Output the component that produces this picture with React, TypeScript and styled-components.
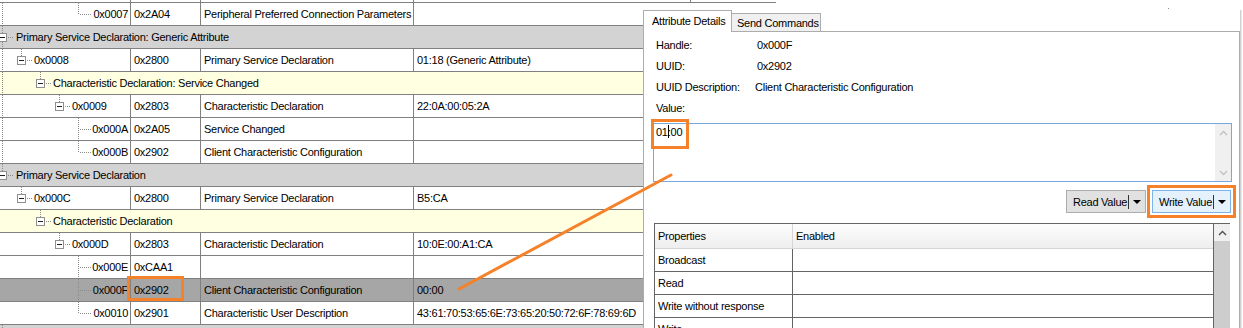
import React from "react";
import styled, { createGlobalStyle } from "styled-components";

const GRID = "#808080";
const ORANGE = "#f5822b";

const GlobalStyle = createGlobalStyle`
  html, body {
    margin: 0;
    padding: 0;
    background: #fff;
    overflow: hidden;
  }
  body {
    font-family: "Liberation Sans", Arial, sans-serif;
    font-size: 11px;
    letter-spacing: -0.25px;
    color: #000;
  }
`;

type Tone = "white" | "gray" | "yellow" | "selected";
const toneBg: Record<Tone, string> = {
  white: "#ffffff",
  gray: "#d3d3d3",
  yellow: "#ffffe1",
  selected: "#a6a6a6",
};

type AttrRow = {
  kind: "attr";
  handle: string;
  uuid: string;
  desc: string;
  value: string;
  depth: number;
  leaf?: "mid" | "last";
  selected?: boolean;
  root?: boolean;
};

type GroupRow = {
  kind: "group";
  text: string;
  depth: number;
  tone: "gray" | "yellow";
  root?: boolean;
  up?: boolean;
  down?: boolean;
};

type RowData = AttrRow | GroupRow;

const rows: RowData[] = [
  { kind: "attr", handle: "0x0007", uuid: "0x2A04", desc: "Peripheral Preferred Connection Parameters", value: "", depth: 4, leaf: "last", root: true },
  { kind: "group", text: "Primary Service Declaration: Generic Attribute", depth: 0, tone: "gray", up: true, down: true },
  { kind: "attr", handle: "0x0008", uuid: "0x2800", desc: "Primary Service Declaration", value: "01:18 (Generic Attribute)", depth: 1, root: true },
  { kind: "group", text: "Characteristic Declaration: Service Changed", depth: 2, tone: "yellow", root: true },
  { kind: "attr", handle: "0x0009", uuid: "0x2803", desc: "Characteristic Declaration", value: "22:0A:00:05:2A", depth: 3, root: true },
  { kind: "attr", handle: "0x000A", uuid: "0x2A05", desc: "Service Changed", value: "", depth: 4, leaf: "mid", root: true },
  { kind: "attr", handle: "0x000B", uuid: "0x2902", desc: "Client Characteristic Configuration", value: "", depth: 4, leaf: "last", root: true },
  { kind: "group", text: "Primary Service Declaration", depth: 0, tone: "gray", up: true },
  { kind: "attr", handle: "0x000C", uuid: "0x2800", desc: "Primary Service Declaration", value: "B5:CA", depth: 1 },
  { kind: "group", text: "Characteristic Declaration", depth: 2, tone: "yellow" },
  { kind: "attr", handle: "0x000D", uuid: "0x2803", desc: "Characteristic Declaration", value: "10:0E:00:A1:CA", depth: 3 },
  { kind: "attr", handle: "0x000E", uuid: "0xCAA1", desc: "", value: "", depth: 4, leaf: "mid" },
  { kind: "attr", handle: "0x000F", uuid: "0x2902", desc: "Client Characteristic Configuration", value: "00:00", depth: 4, leaf: "mid", selected: true },
  { kind: "attr", handle: "0x0010", uuid: "0x2901", desc: "Characteristic User Description", value: "43:61:70:53:65:6E:73:65:20:50:72:6F:78:69:6D", depth: 4, leaf: "last" },
  { kind: "group", text: "Primary Service Declaration", depth: 0, tone: "gray", up: true },
];

const properties = ["Broadcast", "Read", "Write without response", "Write"];

/* ---------- layout ---------- */

const Screen = styled.div`
  position: relative;
  display: flex;
  width: 1243px;
  height: 328px;
  overflow: hidden;
  background: #fff;
`;

const TreeGrid = styled.div`
  width: 643px;
  flex-shrink: 0;
  display: flex;
  flex-direction: column;
`;

const Row = styled.div<{ $tone: Tone }>`
  display: grid;
  grid-template-columns: 131px 70px 213px 1fr;
  height: 23px;
  flex-shrink: 0;
  box-sizing: border-box;
  border-bottom: 1px solid ${GRID};
  background: ${(p) => toneBg[p.$tone]};
`;

const Sliver = styled(Row)`
  height: 3px;
`;

const Cell = styled.div<{ $last?: boolean }>`
  display: flex;
  align-items: center;
  padding: 0 3px;
  line-height: 22px;
  white-space: nowrap;
  overflow: hidden;
  border-right: ${(p) => (p.$last ? "none" : `1px solid ${GRID}`)};
`;

const TreeCell = styled(Cell)`
  padding: 0 2px 0 0;
`;

const HandleText = styled.span<{ $right?: boolean }>`
  margin-left: ${(p) => (p.$right ? "auto" : "1px")};
`;

const GroupBar = styled.div<{ $tone: Tone }>`
  display: flex;
  align-items: center;
  height: 23px;
  flex-shrink: 0;
  box-sizing: border-box;
  border-bottom: 1px solid ${GRID};
  background: ${(p) => toneBg[p.$tone]};
  line-height: 22px;
  white-space: nowrap;
`;

const GroupText = styled.span<{ $root?: boolean }>`
  margin-left: ${(p) => (p.$root ? "2px" : "1px")};
`;

const Glyph = styled.svg`
  display: block;
  flex-shrink: 0;
  align-self: flex-start;
`;

/* ---------- right panel ---------- */

const Side = styled.div`
  flex: 1;
  display: flex;
  flex-direction: column;
`;

const TopStrip = styled.div`
  display: flex;
  height: 10px;
  flex-shrink: 0;
`;

const Rule = styled.div`
  width: 133px;
  height: 2px;
  border-bottom: 1px solid ${GRID};
`;

const RuleTick = styled.div`
  width: 47px;
  height: 2px;
  border-right: 1px solid ${GRID};
`;

const Speck = styled.div`
  width: 1px;
  height: 1px;
  margin: 8px 0 0 392px;
  background: #8a8a8a;
`;

const Panel = styled.div`
  width: 597px;
  flex: 1;
  display: flex;
  flex-direction: column;
  box-shadow: 1px 0 0 #d0d0d0, 2px 0 0 #e8e8e8;
`;

const TabStrip = styled.div`
  display: flex;
  align-items: flex-end;
  height: 22px;
  box-sizing: border-box;
  border-bottom: 1px solid #acacac;
`;

const Tab = styled.div<{ $active?: boolean }>`
  position: relative;
  box-sizing: border-box;
  height: ${(p) => (p.$active ? "22px" : "18px")};
  margin-bottom: ${(p) => (p.$active ? "-1px" : "0")};
  z-index: ${(p) => (p.$active ? 1 : 0)};
  width: ${(p) => (p.$active ? "89px" : "89px")};
  padding-left: ${(p) => (p.$active ? "8px" : "5px")};
  border: 1px solid #acacac;
  border-bottom: none;
  border-left: ${(p) => (p.$active ? "1px solid #acacac" : "none")};
  background: ${(p) => (p.$active ? "#fff" : "#f0f0f0")};
  line-height: ${(p) => (p.$active ? "20px" : "18px")};
  white-space: nowrap;
`;

const Page = styled.div`
  flex: 1;
  display: flex;
  flex-direction: column;
  padding: 3px 7px 0 9px;
  border-left: 1px solid #acacac;
  border-right: 1px solid #acacac;
  background: #fff;
`;

const InfoRow = styled.div`
  display: flex;
  height: 21px;
  line-height: 21px;
  padding-left: 3px;
  white-space: nowrap;
`;

const InfoLabel = styled.span`
  width: 101px;
  flex-shrink: 0;
`;

const InfoValue = styled.span<{ $shift?: number }>`
  margin-left: ${(p) => p.$shift ?? 0}px;
`;

const TextBox = styled.div`
  display: flex;
  height: 59px;
  margin-top: 4px;
  box-sizing: border-box;
  border: 1px solid #7aa7de;
`;

const TextArea = styled.div`
  flex: 1;
  padding: 1px 2px;
  line-height: 15px;
`;

const Caret = styled.span`
  display: inline-block;
  width: 1px;
  height: 13px;
  margin-right: -1px;
  vertical-align: -2px;
  background: #000;
`;

const VScroll = styled.div<{ $track?: string }>`
  width: 16px;
  flex-shrink: 0;
  display: flex;
  flex-direction: column;
  justify-content: space-between;
  background: ${(p) => p.$track ?? "#f0f0f0"};
`;

const ScrollButton = styled.div`
  height: 17px;
  display: flex;
  align-items: center;
  justify-content: center;
  background: #f0f0f0;
`;

const ButtonBar = styled.div`
  display: flex;
  justify-content: flex-end;
  gap: 6px;
  margin: 8px 1px 0 0;
`;

const SplitButton = styled.div<{ $hot?: boolean }>`
  display: flex;
  align-items: center;
  box-sizing: border-box;
  height: 23px;
  width: ${(p) => (p.$hot ? "79px" : "80px")};
  padding-left: 6px;
  border: 1px solid ${(p) => (p.$hot ? "#7eb4ea" : "#adadad")};
  background: ${(p) => (p.$hot ? "#e5f1fb" : "#e1e1e1")};
  white-space: nowrap;
`;

const SplitDivider = styled.span`
  width: 1px;
  height: 14px;
  margin-left: auto;
  background: #333;
`;

const DropArrow = styled.span`
  width: 0;
  height: 0;
  margin: 0 4px 0 4px;
  border-left: 4px solid transparent;
  border-right: 4px solid transparent;
  border-top: 4px solid #000;
`;

const PropGrid = styled.div`
  display: flex;
  flex: 1;
  margin: 10px 2px 0 1px;
  border-left: 1px solid #646464;
  border-top: 1px solid #646464;
`;

const PropTable = styled.div`
  flex: 1;
  display: flex;
  flex-direction: column;
  border-right: 1px solid #646464;
`;

const PropRow = styled.div<{ $head?: boolean }>`
  display: grid;
  grid-template-columns: 138px 1fr;
  height: ${(p) => (p.$head ? "25px" : "23px")};
  flex-shrink: 0;
  box-sizing: border-box;
  border-bottom: 1px solid ${(p) => (p.$head ? "#d5d5d5" : "#646464")};
  background: ${(p) => (p.$head ? "linear-gradient(#fdfdfd, #eeeeee)" : "#fff")};
`;

const PropCell = styled.div<{ $head?: boolean; $last?: boolean }>`
  padding-left: 3px;
  line-height: ${(p) => (p.$head ? "24px" : "22px")};
  border-right: ${(p) => (p.$last ? "none" : `1px solid ${p.$head ? "#d5d5d5" : "#646464"}`)};
  white-space: nowrap;
`;

const Annotations = styled.svg`
  position: absolute;
  left: 0;
  top: 0;
  pointer-events: none;
`;

/* ---------- drawings ---------- */

const DOT = "#8a8a8a";

type GlyphProps = {
  depth: number;
  box?: boolean;
  leaf?: "mid" | "last";
  root?: boolean;
  up?: boolean;
  down?: boolean;
};

const TreeGlyph = ({ depth, box, leaf, root, up, down }: GlyphProps) => {
  const cx = 2 + 19 * depth;
  const w = box ? cx + 12 : 92;
  const dots = { stroke: DOT, strokeWidth: 1, strokeDasharray: "1 1" };
  return (
    <Glyph width={w} height={22} viewBox={`0 0 ${w} 22`}>
      {root && depth > 0 && <line x1={2.5} y1={0} x2={2.5} y2={22} {...dots} />}
      {box && depth === 0 && up && <line x1={2.5} y1={0} x2={2.5} y2={7} {...dots} />}
      {box && depth === 0 && down && <line x1={2.5} y1={16} x2={2.5} y2={22} {...dots} />}
      {box && depth > 0 && <line x1={cx + 0.5} y1={0} x2={cx + 0.5} y2={7} {...dots} />}
      {box && <line x1={cx + 6} y1={11.5} x2={cx + 12} y2={11.5} {...dots} />}
      {box && (
        <>
          <rect x={cx - 3.5} y={7.5} width={8} height={8} fill="#fff" stroke="#8f8f8f" />
          <line x1={cx - 2} y1={11.5} x2={cx + 3} y2={11.5} stroke="#202020" />
        </>
      )}
      {leaf && (
        <>
          <line x1={78.5} y1={0} x2={78.5} y2={leaf === "last" ? 12 : 22} {...dots} />
          <line x1={80} y1={11.5} x2={91} y2={11.5} {...dots} />
        </>
      )}
    </Glyph>
  );
};

const Chevron = ({ dir, color }: { dir: "up" | "down"; color: string }) => (
  <svg width={9} height={6} viewBox="0 0 9 6">
    <polyline
      points={dir === "up" ? "1,5 4.5,1.5 8,5" : "1,1 4.5,4.5 8,1"}
      fill="none"
      stroke={color}
      strokeWidth={1.4}
    />
  </svg>
);

const TreeRow = ({ row }: { row: RowData }) => {
  if (row.kind === "group") {
    return (
      <GroupBar $tone={row.tone}>
        <TreeGlyph depth={row.depth} box root={row.root} up={row.up} down={row.down} />
        <GroupText $root={row.depth === 0}>{row.text}</GroupText>
      </GroupBar>
    );
  }
  return (
    <Row $tone={row.selected ? "selected" : "white"}>
      <TreeCell>
        <TreeGlyph depth={row.depth} box={!row.leaf} leaf={row.leaf} root={row.root} />
        <HandleText $right={!!row.leaf}>{row.handle}</HandleText>
      </TreeCell>
      <Cell>{row.uuid}</Cell>
      <Cell>{row.desc}</Cell>
      <Cell $last>{row.value}</Cell>
    </Row>
  );
};

export default function App() {
  return (
    <>
      <GlobalStyle />
      <Screen>
        <TreeGrid>
          <Sliver $tone="white">
            <Cell />
            <Cell />
            <Cell />
            <Cell $last />
          </Sliver>
          {rows.map((r, i) => (
            <TreeRow key={i} row={r} />
          ))}
        </TreeGrid>

        <Side>
          <TopStrip>
            <Rule>
              <RuleTick />
            </Rule>
            <Speck />
          </TopStrip>
          <Panel>
            <TabStrip>
              <Tab $active>Attribute Details</Tab>
              <Tab>Send Commands</Tab>
            </TabStrip>
            <Page>
              <InfoRow>
                <InfoLabel>Handle:</InfoLabel>
                <InfoValue>0x000F</InfoValue>
              </InfoRow>
              <InfoRow>
                <InfoLabel>UUID:</InfoLabel>
                <InfoValue>0x2902</InfoValue>
              </InfoRow>
              <InfoRow>
                <InfoLabel>UUID Description:</InfoLabel>
                <InfoValue $shift={-2}>Client Characteristic Configuration</InfoValue>
              </InfoRow>
              <InfoRow>
                <InfoLabel>Value:</InfoLabel>
              </InfoRow>
              <TextBox>
                <TextArea>
                  01<Caret />:00
                </TextArea>
                <VScroll>
                  <ScrollButton>
                    <Chevron dir="up" color="#c2c2c2" />
                  </ScrollButton>
                  <ScrollButton>
                    <Chevron dir="down" color="#c2c2c2" />
                  </ScrollButton>
                </VScroll>
              </TextBox>
              <ButtonBar>
                <SplitButton>
                  Read Value
                  <SplitDivider />
                  <DropArrow />
                </SplitButton>
                <SplitButton $hot>
                  Write Value
                  <SplitDivider />
                  <DropArrow />
                </SplitButton>
              </ButtonBar>
              <PropGrid>
                <PropTable>
                  <PropRow $head>
                    <PropCell $head>Properties</PropCell>
                    <PropCell $head $last>Enabled</PropCell>
                  </PropRow>
                  {properties.map((p) => (
                    <PropRow key={p}>
                      <PropCell>{p}</PropCell>
                      <PropCell $last />
                    </PropRow>
                  ))}
                </PropTable>
                <VScroll $track="#cdcdcd">
                  <ScrollButton>
                    <Chevron dir="up" color="#505050" />
                  </ScrollButton>
                </VScroll>
              </PropGrid>
            </Page>
          </Panel>
        </Side>

        <Annotations width={1243} height={328} viewBox="0 0 1243 328">
          <g fill="none" stroke={ORANGE} strokeWidth={3}>
            <rect x={128.5} y={277.5} width={54} height={22} />
            <rect x={652.5} y={120.5} width={35} height={27} />
            <rect x={1148.5} y={186.5} width={86} height={30} />
            <line x1={459} y1={289} x2={671} y2={175} strokeLinecap="round" />
          </g>
        </Annotations>
      </Screen>
    </>
  );
}
